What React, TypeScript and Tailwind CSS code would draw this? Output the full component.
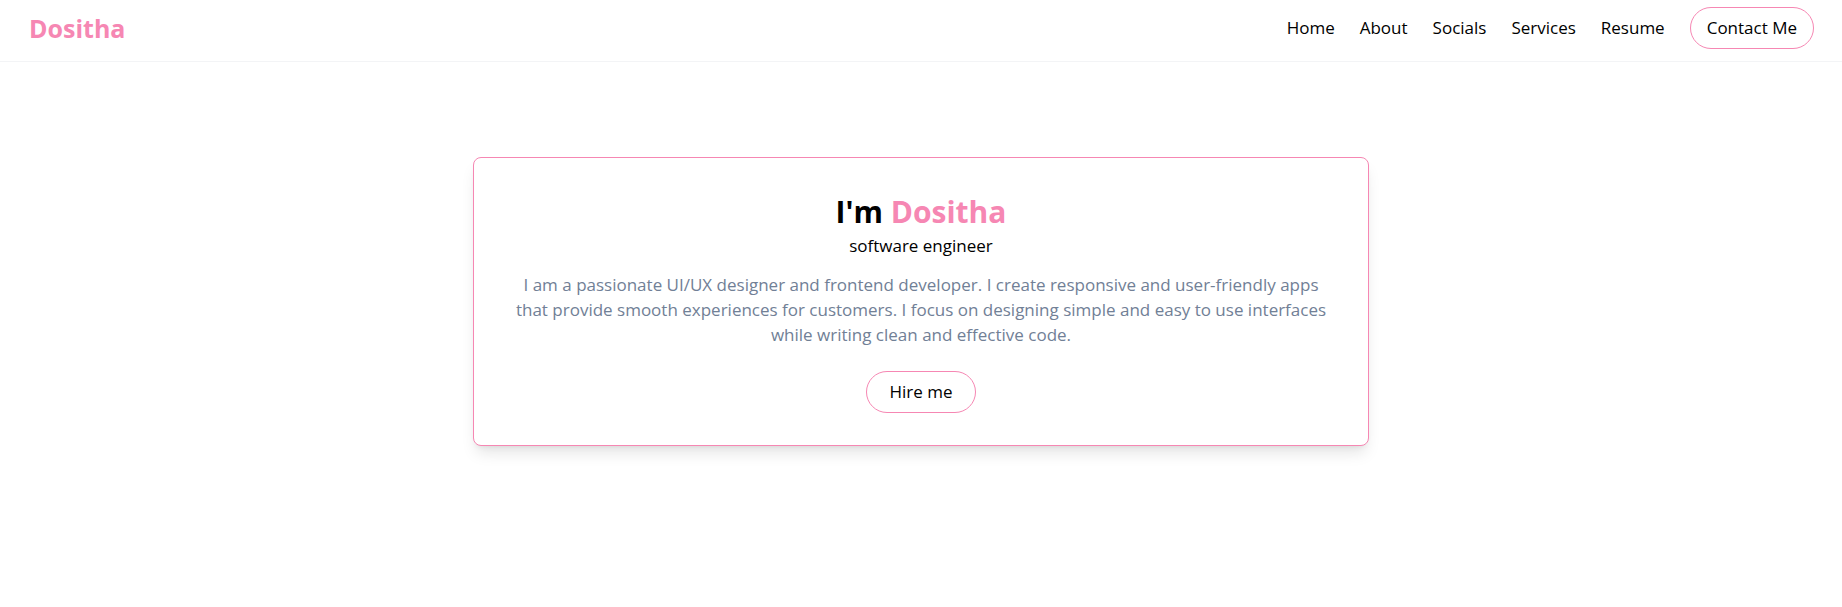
const links = ["Home", "About", "Socials", "Services", "Resume"];

const Navbar = () => {
  return (
    <header className="flex items-center justify-between border-b border-gray-100 px-7 pt-[7px] pb-[12px]">
      <a href="#" className="pl-px text-[25px] font-bold leading-none text-[#f687b3]">
        Dositha
      </a>

      <nav className="flex items-center gap-[25px]">
        {links.map((link) => (
          <a key={link} href="#" className="text-[17px] text-black">
            {link}
          </a>
        ))}
        <button className="rounded-full border border-[#f687b3] px-[16px] py-2 text-[17px] leading-6 text-black">
          Contact Me
        </button>
      </nav>
    </header>
  );
};

const Hero = () => {
  return (
    <section className="flex justify-center pt-[95px]">
      <div className="w-[896px] rounded-lg border border-[#f687b3] bg-white px-10 pt-[36px] pb-8 text-center shadow-lg">
        <h1 className="text-[30px] font-bold leading-9 text-black">
          I'm <span className="text-[#f687b3]">Dositha</span>
        </h1>
        <p className="mt-0.5 text-[17px] leading-7 text-black">software engineer</p>
        <p className="mt-3 text-[17px] leading-[25px] text-[#718096]">
          I am a passionate UI/UX designer and frontend developer. I create
          responsive and user-friendly apps that provide smooth experiences for
          customers. I focus on designing simple and easy to use interfaces
          while writing clean and effective code.
        </p>
        <button className="mt-6 rounded-full border border-[#f687b3] px-[22px] py-2 text-[17px] leading-6 text-black">
          Hire me
        </button>
      </div>
    </section>
  );
};

export default function App() {
  return (
    <div
      className="min-h-screen bg-white"
      style={{ fontFamily: '"Open Sans", "Noto Sans", sans-serif' }}
    >
      <Navbar />
      <Hero />
    </div>
  );
}
